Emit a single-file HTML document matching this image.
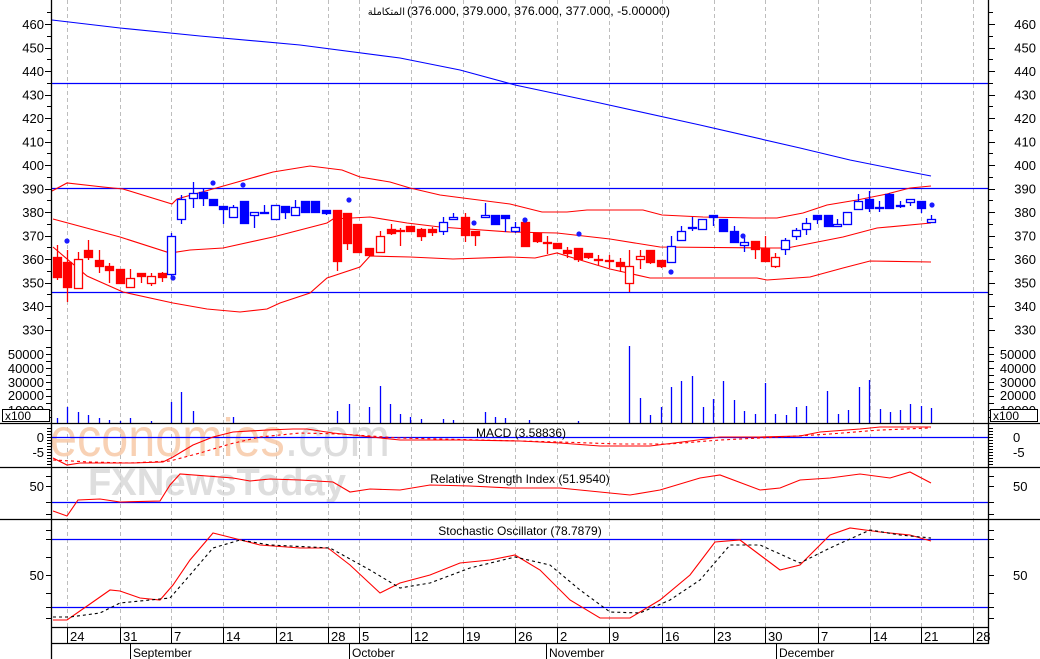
<!DOCTYPE html>
<html><head><meta charset="utf-8"><style>
html,body{margin:0;padding:0;background:#fff;}
svg{display:block;font-family:"Liberation Sans","DejaVu Sans",sans-serif;}
</style></head><body>
<svg id="c" width="1040" height="659" xmlns="http://www.w3.org/2000/svg">
<rect width="1040" height="659" fill="#fff"/>
<g id="grid" stroke="#bdbdbd" stroke-dasharray="4,3" stroke-width="1"></g>
<text x="50" y="456" font-size="54" fill="#f7c9a8" opacity="0.85" textLength="340" lengthAdjust="spacingAndGlyphs">economies<tspan fill="#d8d8d8">.com</tspan></text>
<text x="88" y="495" font-size="38" fill="#d6d6d6" opacity="0.8" font-weight="bold" textLength="258" lengthAdjust="spacingAndGlyphs">FXNewsToday</text>
<g id="main"></g>
<g stroke="#000" stroke-width="1.3" fill="none">
<line x1="51.5" y1="0" x2="51.5" y2="659"/>
<line x1="988.5" y1="0" x2="988.5" y2="644"/>
<line x1="0" y1="423.5" x2="1040" y2="423.5"/>
<line x1="0" y1="467.5" x2="1040" y2="467.5"/>
<line x1="0" y1="519.5" x2="1040" y2="519.5"/>
<line x1="51" y1="627.5" x2="989" y2="627.5"/>
<line x1="51" y1="643.5" x2="989" y2="643.5"/>
</g>
<g id="ticks" stroke="#000" stroke-width="1"></g>
<g id="labels" font-size="13" fill="#000"></g>
<rect x="2.5" y="409.5" width="47" height="12" fill="#fff" stroke="#000"/>
<text x="5" y="420" font-size="12">x100</text>
<rect x="990.5" y="409.5" width="47" height="12" fill="#fff" stroke="#000"/>
<text x="993" y="420" font-size="12">x100</text>
<text x="405" y="15" font-size="10" text-anchor="end" font-family="'DejaVu Sans',sans-serif">المتكاملة</text>
<text x="407" y="15" font-size="12" textLength="263" lengthAdjust="spacingAndGlyphs">(376.000, 379.000, 376.000, 377.000, -5.00000)</text>
<text x="521" y="437" font-size="12" text-anchor="middle">MACD (3.58836)</text>
<text x="520" y="483" font-size="12" text-anchor="middle">Relative Strength Index (51.9540)</text>
<text x="520" y="535" font-size="12" text-anchor="middle">Stochastic Oscillator (78.7879)</text>
</svg>
<script>
var NS="http://www.w3.org/2000/svg";
function el(p,t,a){var e=document.createElementNS(NS,t);for(var k in a)e.setAttribute(k,a[k]);p.appendChild(e);return e;}
var G=document.getElementById('grid'),M=document.getElementById('main'),T=document.getElementById('ticks'),L=document.getElementById('labels');
var gx=[67,120,171,223,276,328,359,411,463,515,557,609,662,714,765,818,870,921,973];
var dl=["24","31","7","14","21","28","5","12","19","26","2","9","16","23","30","7","14","21","28"];
gx.forEach(function(x,i){el(G,'line',{x1:x+.5,y1:0,x2:x+.5,y2:627});
 el(T,'line',{x1:x+.5,y1:627,x2:x+.5,y2:643});
 var t=el(L,'text',{x:x+3,y:641,'font-size':13});t.textContent=dl[i];});
[[130,"September"],[349,"October"],[546,"November"],[776,"December"]].forEach(function(m){
 el(T,'line',{x1:m[0]+.5,y1:643,x2:m[0]+.5,y2:659});var t=el(L,'text',{x:m[0]+3,y:657,'font-size':12});t.textContent=m[1];});
function hl(y,x1,x2){el(M,'line',{x1:x1||52,y1:y+.5,x2:x2||988,y2:y+.5,stroke:'#0000ff','stroke-width':1.2});}
hl(83);hl(188);hl(292);hl(437);hl(502);hl(539);hl(607);
function pl(pts,col,dash,w){el(M,'polyline',{points:pts,fill:'none',stroke:col,'stroke-width':w||1.1,'stroke-dasharray':dash||'none'});}
pl("52,20 120,28 200,36 300,45 400,58 460,70 515,85 600,103 700,125 800,148 850,160 900,170 931,176","#0000ff");
pl("52,191 67,183 103,187 123,189 172,204 177,199 227,185 273,172 310,166 342,170 360,177 390,182 410,188 440,195 463,198 510,204 542,212 567,212 587,210 643,210 662,215 703,217 753,218 777,218 803,213 827,205 857,200 887,194 910,188 931,186","#ff0000");
pl("53,219 120,237 170,253 190,250 223,248 273,237 327,223 333,219 370,217 407,223 440,227 510,232 557,233 610,239 660,247 767,248 787,248 843,237 877,228 931,223","#ff0000");
pl("53,247 87,276 123,292 173,303 207,309 240,312 267,309 280,303 310,293 327,278 360,267 370,256 410,257 453,259 510,257 535,258 557,253 610,269 650,278 690,278 757,278 767,280 810,277 843,268 870,261 931,262","#ff0000");
var C=[[57,257,277,245,280,'r',1],[67,262,287,250,302,'r',1],[78,259,288,252,289,'r',0],[88,250,257,240,260,'r',1],[99,260,266,250,273,'r',1],[109,266,270,263,283,'r',1],[120,269,283,269,283,'r',1],[130,278,287,269,287,'r',0],[141,273,276,273,283,'r',1],[151,276,283,273,286,'r',0],[162,273,277,272,282,'r',1],
[171,236,274,233,277,'b',0],[181,199,219,195,224,'b',0],[193,193,198,182,208,'b',0],[203,192,198,188,206,'b',1],[213,199,205,199,205,'b',1],[223,206,209,206,224,'b',1],[233,207,217,205,218,'b',0],[244,201,223,201,223,'b',1],[254,212,215,212,228,'b',0],[264,212,212,205,212,'b',0],[275,205,219,205,219,'b',0],[285,206,212,206,219,'b',1],[295,207,215,200,215,'b',0],[305,201,212,201,212,'b',1],[315,201,212,201,212,'b',1],[326,210,213,210,215,'b',1],
[337,210,261,210,271,'r',1],[347,213,243,213,250,'r',1],[357,224,252,224,252,'r',1],[369,248,255,248,255,'r',1],[380,236,252,231,252,'r',0],[391,229,233,224,235,'r',1],[400,230,230,228,246,'r',1],[410,226,231,226,232,'r',1],[421,229,236,228,241,'r',1],[432,229,232,227,236,'r',1],[443,222,231,217,235,'b',0],[453,217,219,213,219,'b',0],[465,217,235,213,242,'r',1],[475,231,235,231,246,'r',1],[485,215,217,203,217,'b',0],[495,215,224,215,224,'b',1],[505,215,218,215,232,'b',1],[515,227,231,222,233,'b',0],
[525,222,246,220,246,'r',1],[537,233,241,233,243,'r',1],[547,242,242,236,254,'r',1],[557,243,248,243,248,'r',1],[567,250,253,247,258,'r',1],[578,248,259,248,262,'r',1],[588,253,257,253,259,'r',1],[598,259,259,255,265,'r',1],[609,260,260,255,268,'r',1],[620,262,266,258,272,'r',1],[629,266,283,250,292,'r',0],[640,256,259,250,269,'r',0],[650,250,262,250,264,'r',1],[661,260,266,260,268,'r',1],
[671,246,262,236,262,'b',0],[681,231,240,226,240,'b',0],[692,227,227,217,231,'b',1],[702,219,229,219,229,'b',0],[713,215,217,215,226,'b',1],[723,219,231,219,231,'b',1],[734,231,242,226,242,'b',1],[744,242,245,236,252,'b',0],[755,241,249,241,259,'r',1],[765,248,261,236,261,'r',1],[775,257,266,253,268,'r',0],[785,240,249,238,255,'b',0],[796,230,236,228,240,'b',0],[806,223,229,218,235,'b',0],[817,215,219,215,224,'b',1],[828,215,226,215,226,'b',1],[837,224,226,219,226,'b',0],[847,212,224,212,224,'b',0],[858,201,209,194,209,'b',0],[869,199,208,191,212,'b',1],[879,207,207,201,212,'b',1],[889,194,208,193,208,'b',1],[900,205,205,201,208,'b',1],[910,199,202,199,206,'b',0],[921,201,208,201,213,'b',1],[931,219,222,215,222,'b',0]];
C.forEach(function(c){var col=c[5]=='r'?'#ff0000':'#0000ff';
 el(M,'line',{x1:c[0]+.5,y1:c[3],x2:c[0]+.5,y2:c[4],stroke:col,'stroke-width':1.3});
 var h=Math.max(c[2]-c[1],1);
 el(M,'rect',{x:c[0]-3.5,y:c[1]+.5,width:8,height:h,fill:c[6]?col:'#fff',stroke:col,'stroke-width':1.3});});
[[67,241],[173,278],[213,183],[243,185],[349,200],[474,223],[525,220],[579,234],[671,272],[743,236],[932,205]].forEach(function(d){el(M,'circle',{cx:d[0],cy:d[1],r:2.6,fill:'#1a1aff'});});
var V=[[57,418],[67,407],[78,412],[88,415],[99,418],[109,420],[120,421],[130,418],[151,421],[171,402],[181,392],[193,411],[233,417],[337,411],[349,404],[369,407],[380,386],[390,404],[400,414],[410,417],[421,419],[443,419],[453,420],[485,412],[495,417],[505,418],[529,420],[578,421],[629,346],[640,398],[650,415],[661,407],[671,387],[681,381],[692,376],[703,407],[713,399],[723,381],[734,400],[744,411],[755,414],[765,383],[775,414],[786,415],[796,407],[806,406],[827,391],[838,414],[848,410],[859,387],[869,380],[880,409],[890,412],[900,410],[910,404],[921,406],[931,408]];
V.forEach(function(v){el(M,'line',{x1:v[0]+.5,y1:v[1],x2:v[0]+.5,y2:423,stroke:'#0000ff','stroke-width':1.3});});
pl("53,458 67,465 80,463 110,463 133,463 163,462 173,457 193,445 213,437 233,432 267,430 293,429 307,429 333,433 400,440 460,440 520,441 560,443 600,446 650,446 690,441 720,437 760,437 800,436 820,432 860,429 880,427 931,427","#ff0000");
pl("53,460 90,462 130,463 170,461 200,453 230,444 260,437 300,433 340,434 400,438 480,440 560,442 620,444 670,444 720,440 780,437 830,434 880,430 931,428","#ff0000","3,3");
pl("53,511 67,516 78,500 100,499 120,502 160,501 170,485 180,474 233,478 250,481 270,479 300,480 333,482 350,492 370,489 400,490 430,485 470,486 510,488 560,488 600,492 630,495 660,490 700,478 720,475 760,490 780,488 800,480 830,478 860,474 890,478 910,472 931,483","#ff0000");
pl("53,620 67,620 90,604 110,590 120,591 140,598 160,600 173,585 190,560 213,533 233,538 260,545 300,548 328,548 350,565 380,593 400,583 430,575 460,563 490,560 515,555 540,570 570,600 600,618 630,618 660,600 690,575 715,542 740,540 760,555 780,570 800,565 830,535 850,528 880,532 910,535 931,541","#ff0000");
pl("53,617 70,617 100,613 120,603 140,601 170,598 190,575 213,548 240,540 270,545 330,548 370,570 400,588 430,583 470,568 515,557 550,565 580,590 610,612 640,613 670,600 700,580 730,545 760,545 800,563 830,548 870,530 900,535 931,538","#000","3,3",1.1);
function lab(y,t,rs){var a=el(L,'text',{x:44,y:y+5,'text-anchor':'end'});a.textContent=t;
 var b=rs?el(L,'text',{x:1013,y:y+5}):el(L,'text',{x:1036,y:y+5,'text-anchor':'end'});b.textContent=t;}
for(var p=460;p>=330;p-=10){var y=24+(460-p)*2.35;lab(y,p);}
for(var p=465;p>=330;p-=5){var y=Math.round(24+(460-p)*2.35)+.5;var w=p%10==0?6:4;
 el(T,'line',{x1:51-w,y1:y,x2:51,y2:y});el(T,'line',{x1:989,y1:y,x2:989+w,y2:y});}
[[354,"50000"],[368,"40000"],[382,"30000"],[395,"20000"],[410,"10000"]].forEach(function(v){lab(v[0],v[1]);});
for(var y=347;y<423;y+=7){el(T,'line',{x1:46,y1:y+.5,x2:51,y2:y+.5});el(T,'line',{x1:989,y1:y+.5,x2:994,y2:y+.5});}
lab(437,"0",1);lab(452,"-5",1);
for(var y=428;y<467;y+=3){el(T,'line',{x1:47,y1:y+.5,x2:51,y2:y+.5});el(T,'line',{x1:989,y1:y+.5,x2:993,y2:y+.5});}
lab(486,"50",1);lab(575,"50",1);
[476,486,502,514].forEach(function(y){el(T,'line',{x1:46,y1:y+.5,x2:51,y2:y+.5});el(T,'line',{x1:989,y1:y+.5,x2:994,y2:y+.5});});
[530,539,557,575,593,607,618].forEach(function(y){el(T,'line',{x1:46,y1:y+.5,x2:51,y2:y+.5});el(T,'line',{x1:989,y1:y+.5,x2:994,y2:y+.5});});
</script>
</body></html>
